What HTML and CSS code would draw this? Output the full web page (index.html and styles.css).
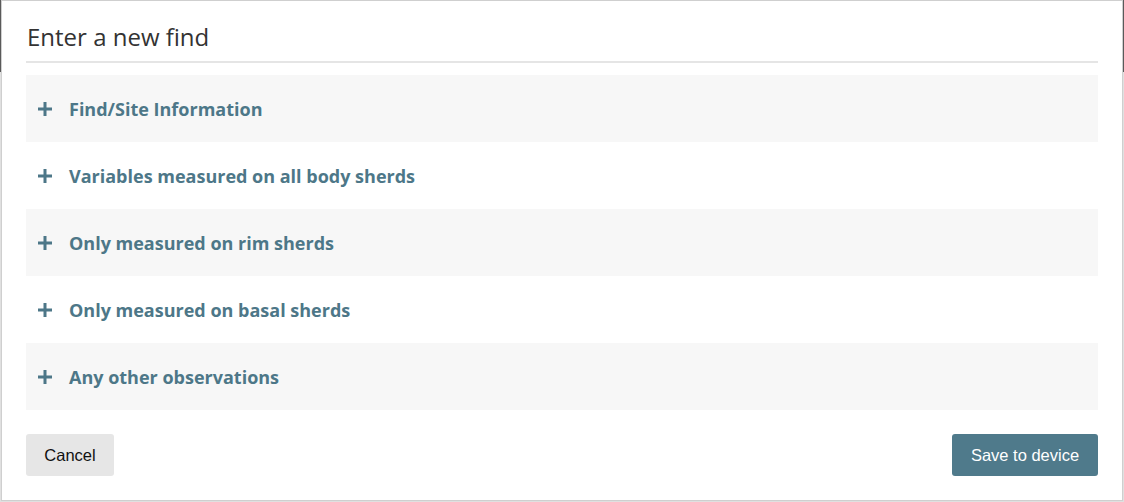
FILE: index.html
```html
<!DOCTYPE html>
<html>
<head>
<meta charset="utf-8">
<link rel="stylesheet" href="styles.css">
</head>
<body>
<div class="modal">
  <div class="modal-header">
    <h1 class="title">Enter a new find</h1>
  </div>
  <div class="accordion">
    <div class="panel shaded"><svg class="plus" viewBox="0 0 14 14"><rect x="5.5" y="0" width="3" height="14"/><rect x="0" y="5.5" width="14" height="3"/></svg><span>Find/Site Information</span></div>
    <div class="panel"><svg class="plus" viewBox="0 0 14 14"><rect x="5.5" y="0" width="3" height="14"/><rect x="0" y="5.5" width="14" height="3"/></svg><span>Variables measured on all body sherds</span></div>
    <div class="panel shaded"><svg class="plus" viewBox="0 0 14 14"><rect x="5.5" y="0" width="3" height="14"/><rect x="0" y="5.5" width="14" height="3"/></svg><span>Only measured on rim sherds</span></div>
    <div class="panel"><svg class="plus" viewBox="0 0 14 14"><rect x="5.5" y="0" width="3" height="14"/><rect x="0" y="5.5" width="14" height="3"/></svg><span>Only measured on basal sherds</span></div>
    <div class="panel shaded"><svg class="plus" viewBox="0 0 14 14"><rect x="5.5" y="0" width="3" height="14"/><rect x="0" y="5.5" width="14" height="3"/></svg><span>Any other observations</span></div>
  </div>
  <div class="modal-footer">
    <button class="btn btn-cancel">Cancel</button>
    <button class="btn btn-save">Save to device</button>
  </div>
</div>
</body>
</html>
```
FILE: styles.css
```css
html, body {
  margin: 0;
  padding: 0;
}
body {
  width: 1124px;
  height: 502px;
  background: linear-gradient(to bottom, #5a5a5a 0, #5a5a5a 72px, #e0e0e0 72px, #e0e0e0 100%);
  font-family: "Open Sans", sans-serif;
  overflow: hidden;
}
.modal {
  box-sizing: border-box;
  margin: 0 1px;
  width: 1122px;
  height: 501px;
  background: #fff;
  border: 1px solid #cfcfcf;
  padding: 0 24px 0 24px;
  display: flex;
  flex-direction: column;
}
.modal-header {
  border-bottom: 2px solid #e5e5e5;
  height: 62px;
  box-sizing: border-box;
  padding-top: 19px;
}
.title {
  margin: 0;
  padding-left: 1px;
  font-size: 24px;
  font-weight: 400;
  color: #333;
  line-height: 33px;
}
.accordion {
  margin-top: 12px;
  display: flex;
  flex-direction: column;
}
.panel {
  height: 67px;
  display: flex;
  align-items: center;
  padding-left: 12px;
  color: #4d7788;
  font-weight: 700;
  font-size: 18px;
}
.panel.shaded {
  background: #f7f7f7;
}
.plus {
  width: 14px;
  height: 14px;
  fill: #4d7788;
  margin-right: 17px;
}
.modal-footer {
  margin-top: 24px;
  display: flex;
  justify-content: space-between;
}
.btn {
  height: 42px;
  border: none;
  border-radius: 3px;
  font-family: "Liberation Sans", Arial, sans-serif;
  font-size: 16.5px;
  padding: 0;
}
.btn-cancel {
  width: 88px;
  background: #e6e6e6;
  color: #111;
}
.btn-save {
  width: 146px;
  background: #4f7a8b;
  color: #fff;
}
```
